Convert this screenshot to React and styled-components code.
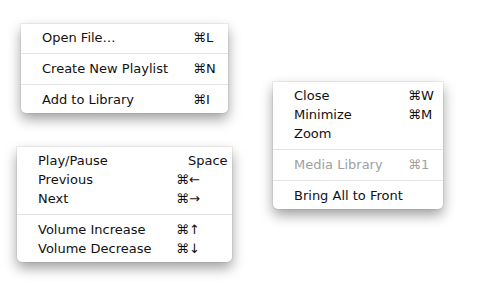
import styled, { createGlobalStyle } from "styled-components";

const GlobalStyle = createGlobalStyle`
  html, body {
    margin: 0;
    padding: 0;
    background: #ffffff;
  }
  body {
    font-family: "DejaVu Sans", "Liberation Sans", sans-serif;
  }
`;

/* ========== Styled Components ========== */
const Canvas = styled.div`
  position: relative;
  width: 482px;
  height: 290px;
  background: #ffffff;
  overflow: hidden;
`;

const Menu = styled.div`
  position: absolute;
  top: ${({ $top }) => $top}px;
  left: ${({ $left }) => $left}px;
  width: ${({ $width }) => $width}px;
  padding: 4px 0;
  background: #ffffff;
  border-radius: 0 0 5px 5px;
  box-shadow: 0 0 0 1px rgba(0, 0, 0, 0.05), 0 6px 13px rgba(0, 0, 0, 0.38);
  display: flex;
  flex-direction: column;
`;

const Item = styled.div`
  display: flex;
  align-items: center;
  height: 19px;
  padding-left: 21px;
  font-size: 13px;
  color: ${({ $disabled }) => ($disabled ? "#a0a0a0" : "#111111")};
  white-space: nowrap;
`;

const Label = styled.span`
  width: ${({ $col }) => $col}px;
  flex-shrink: 0;
`;

const Shortcut = styled.span`
  margin-left: ${({ $shift }) => $shift || 0}px;
`;

const Separator = styled.div`
  height: 12px;
  display: flex;
  align-items: center;

  &::after {
    content: "";
    flex: 1;
    height: 1px;
    background: #e3e3e3;
  }
`;

const menus = [
  {
    top: 24,
    left: 21,
    width: 207,
    col: 151,
    groups: [
      [{ label: "Open File…", key: "⌘L" }],
      [{ label: "Create New Playlist", key: "⌘N" }],
      [{ label: "Add to Library", key: "⌘I" }],
    ],
  },
  {
    top: 82,
    left: 273,
    width: 170,
    col: 114,
    groups: [
      [
        { label: "Close", key: "⌘W" },
        { label: "Minimize", key: "⌘M" },
        { label: "Zoom" },
      ],
      [{ label: "Media Library", key: "⌘1", disabled: true }],
      [{ label: "Bring All to Front" }],
    ],
  },
  {
    top: 147,
    left: 17,
    width: 215,
    col: 138,
    groups: [
      [
        { label: "Play/Pause", key: "Space", shift: 12 },
        { label: "Previous", key: "⌘←" },
        { label: "Next", key: "⌘→" },
      ],
      [
        { label: "Volume Increase", key: "⌘↑" },
        { label: "Volume Decrease", key: "⌘↓" },
      ],
    ],
  },
];

/* ========== Component ========== */
export default function App() {
  return (
    <Canvas>
      <GlobalStyle />
      {menus.map((menu, i) => (
        <Menu key={i} $top={menu.top} $left={menu.left} $width={menu.width}>
          {menu.groups.map((group, g) => (
            <div key={g}>
              {g > 0 && <Separator />}
              {group.map((item) => (
                <Item key={item.label} $disabled={item.disabled}>
                  <Label $col={menu.col}>{item.label}</Label>
                  {item.key && <Shortcut $shift={item.shift}>{item.key}</Shortcut>}
                </Item>
              ))}
            </div>
          ))}
        </Menu>
      ))}
    </Canvas>
  );
}
